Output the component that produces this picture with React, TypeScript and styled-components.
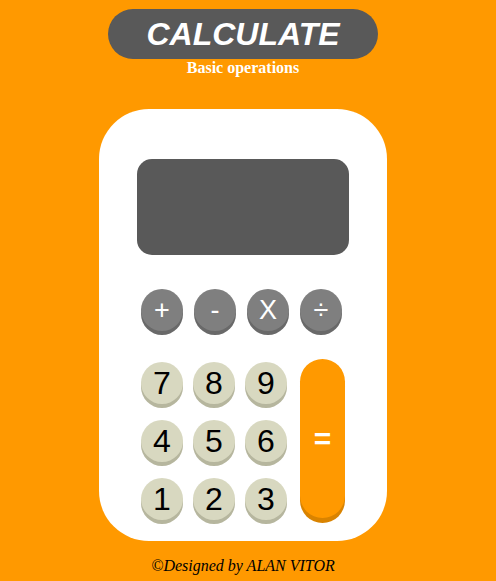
import React from 'react'
import styled, { createGlobalStyle } from 'styled-components'

const GlobalStyle = createGlobalStyle`
  html, body {
    margin: 0;
    padding: 0;
    background: #ff9900;
  }
`

const Page = styled.div`
  display: flex;
  flex-direction: column;
  align-items: center;
  width: 486px;
  min-height: 581px;
  padding-top: 9px;
  box-sizing: border-box;
`

const TitlePill = styled.h1`
  margin: 0;
  width: 270px;
  height: 50px;
  border-radius: 25px;
  background: #595959;
  color: #fff;
  display: flex;
  align-items: center;
  justify-content: center;
  font-family: 'Liberation Sans', Arial, sans-serif;
  font-style: italic;
  font-weight: bold;
  font-size: 32px;
`

const Subtitle = styled.p`
  margin: 0;
  color: #fff;
  font-family: 'Liberation Serif', 'Times New Roman', serif;
  font-weight: bold;
  font-size: 16px;
  line-height: 18px;
`

const Body = styled.div`
  margin-top: 32px;
  width: 288px;
  height: 432px;
  box-sizing: border-box;
  padding: 50px 38px 0;
  background: #fff;
  border-radius: 50px;
  display: flex;
  flex-direction: column;
`

const Screen = styled.div`
  height: 96px;
  border-radius: 15px;
  background: #595959;
`

const OpRow = styled.div`
  display: flex;
  gap: 11px;
  padding: 0 4px;
  margin-top: 34px;
`

const RoundKey = styled.button<{ $tone: 'op' | 'num' }>`
  width: 42px;
  height: 42px;
  border: none;
  border-radius: 50%;
  padding: 0;
  display: flex;
  align-items: center;
  justify-content: center;
  font-family: 'Liberation Sans', Arial, sans-serif;
  font-size: ${({ $tone }) => ($tone === 'op' ? '27px' : '32px')};
  color: ${({ $tone }) => ($tone === 'op' ? '#fff' : '#000')};
  background: ${({ $tone }) => ($tone === 'op' ? '#7f7f7f' : '#d8d8c0')};
  box-shadow: 0 4px 0 ${({ $tone }) => ($tone === 'op' ? '#696969' : '#b6b69e')};
  cursor: pointer;
`

const Keypad = styled.div`
  display: flex;
  align-items: flex-start;
  gap: 13px;
  padding: 0 4px;
  margin-top: 28px;
`

const NumGrid = styled.div`
  display: grid;
  grid-template-columns: repeat(3, 42px);
  column-gap: 10px;
  row-gap: 16px;
  margin-top: 3px;
`

const EqualsKey = styled.button`
  width: 48px;
  height: 159px;
  border: none;
  border-radius: 24px;
  padding: 0;
  background: #ff9900;
  box-shadow: 0 5px 0 #d98300;
  color: #fff;
  font-family: 'Liberation Sans', Arial, sans-serif;
  font-weight: bold;
  font-size: 30px;
  cursor: pointer;
`

const Footer = styled.p`
  margin: 16px 0 0;
  font-family: 'Liberation Serif', 'Times New Roman', serif;
  font-style: italic;
  font-size: 16px;
  line-height: 18px;
  color: #000;
`

const OPS = ['+', '-', 'X', '÷']
const NUMS = ['7', '8', '9', '4', '5', '6', '1', '2', '3']

export default function App() {
  return (
    <>
      <GlobalStyle />
      <Page>
        <TitlePill>CALCULATE</TitlePill>
        <Subtitle>Basic operations</Subtitle>
        <Body>
          <Screen />
          <OpRow>
            {OPS.map((op) => (
              <RoundKey key={op} $tone="op">
                {op}
              </RoundKey>
            ))}
          </OpRow>
          <Keypad>
            <NumGrid>
              {NUMS.map((n) => (
                <RoundKey key={n} $tone="num">
                  {n}
                </RoundKey>
              ))}
            </NumGrid>
            <EqualsKey>=</EqualsKey>
          </Keypad>
        </Body>
        <Footer>©Designed by ALAN VITOR</Footer>
      </Page>
    </>
  )
}
